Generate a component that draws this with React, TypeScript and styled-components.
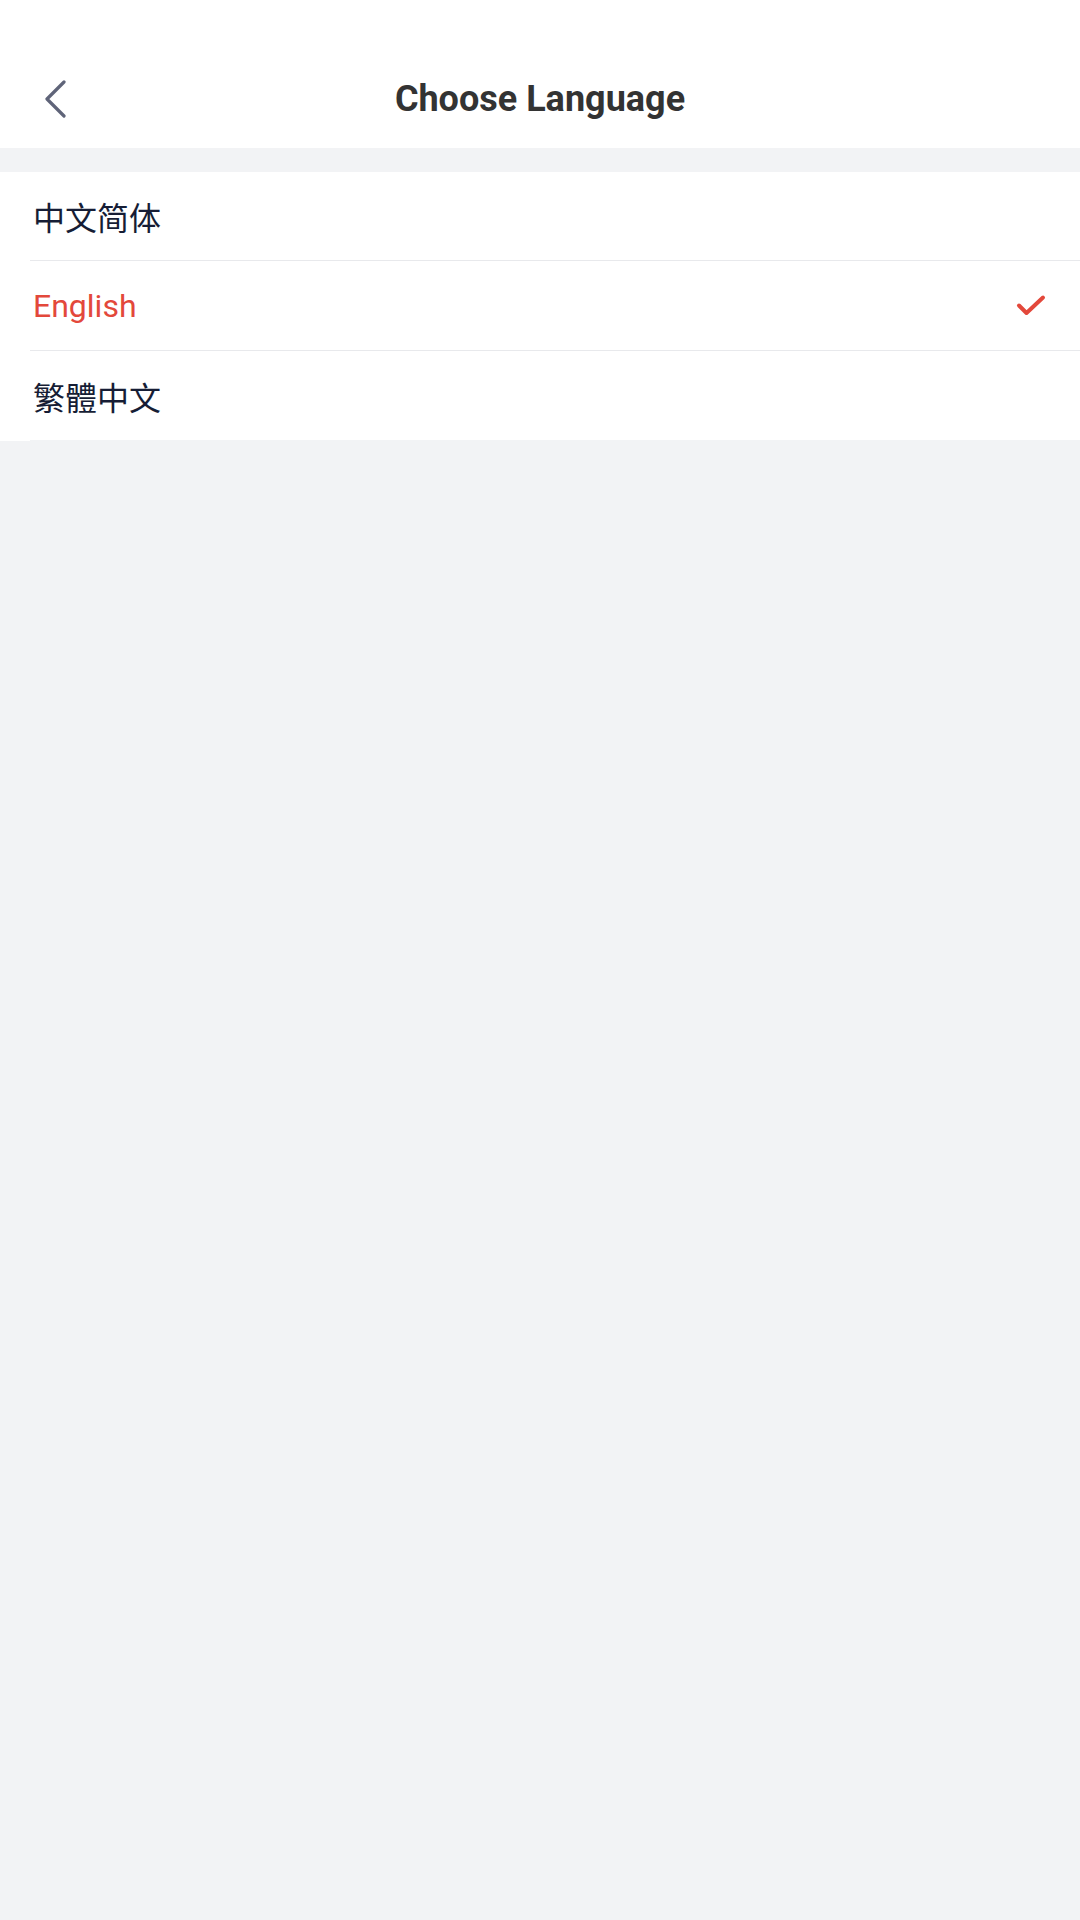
import styled, { createGlobalStyle } from "styled-components";

const GlobalStyle = createGlobalStyle`
  html, body {
    margin: 0;
    padding: 0;
    background-color: #f2f3f5;
    font-family: Roboto, "Noto Sans CJK SC", "Noto Sans", sans-serif;
  }
`;

const Page = styled.div`
  min-height: 1920px;
  background-color: #f2f3f5;
`;

const Header = styled.header`
  background-color: #ffffff;
  padding-top: 50px;
`;

const NavBar = styled.div`
  position: relative;
  height: 98px;
  display: flex;
  align-items: center;
  justify-content: center;
  & h1 {
    margin: 0;
    font-size: 36px;
    font-weight: 700;
    color: #333333;
  }
`;

const BackButton = styled.button`
  position: absolute;
  left: 36px;
  top: 50%;
  transform: translateY(-50%);
  width: 40px;
  height: 50px;
  padding: 0;
  border: none;
  background: none;
  display: flex;
  align-items: center;
  justify-content: center;
  cursor: pointer;
`;

const List = styled.ul`
  list-style: none;
  margin: 24px 0 0;
  padding: 0;
  background-color: #ffffff;
`;

const Item = styled.li<{ $active?: boolean }>`
  margin-left: 30px;
  height: 89px;
  display: flex;
  align-items: center;
  justify-content: space-between;
  padding-left: 3px;
  padding-right: 34px;
  border-bottom: 1px solid #e8e9ec;
  font-size: 32px;
  color: ${(p) => (p.$active ? "#e3483b" : "#161d35")};
  cursor: pointer;
  &:first-child {
    height: 88px;
  }
  &:last-child {
    border-bottom-color: #f2f3f5;
  }
`;

const Check = () => (
  <svg width="30" height="24" viewBox="0 0 30 24">
    <path
      d="M3 11.5 L10.5 19 L27 3.5"
      fill="none"
      stroke="#e3483b"
      strokeWidth="4"
      strokeLinecap="round"
      strokeLinejoin="round"
    />
  </svg>
);

const languages = [
  { label: "中文简体", active: false },
  { label: "English", active: true },
  { label: "繁體中文", active: false },
];

const App = () => {
  return (
    <Page>
      <GlobalStyle />
      <Header>
        <NavBar>
          <BackButton aria-label="back">
            <svg width="24" height="38" viewBox="0 0 24 38">
              <path
                d="M20 2 L3 19 L20 36"
                fill="none"
                stroke="#5f6479"
                strokeWidth="3.2"
                strokeLinecap="round"
                strokeLinejoin="round"
              />
            </svg>
          </BackButton>
          <h1>Choose Language</h1>
        </NavBar>
      </Header>
      <List>
        {languages.map((l) => (
          <Item key={l.label} $active={l.active}>
            <span>{l.label}</span>
            {l.active && <Check />}
          </Item>
        ))}
      </List>
    </Page>
  );
};

export default App;
